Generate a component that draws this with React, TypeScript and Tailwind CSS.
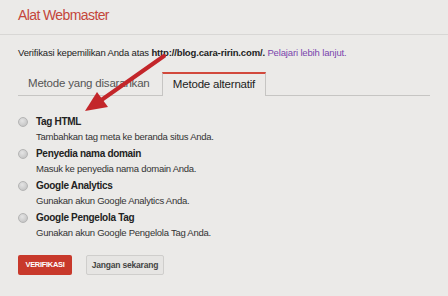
const options = [
  { title: "Tag HTML", desc: "Tambahkan tag meta ke beranda situs Anda." },
  { title: "Penyedia nama domain", desc: "Masuk ke penyedia nama domain Anda." },
  { title: "Google Analytics", desc: "Gunakan akun Google Analytics Anda." },
  { title: "Google Pengelola Tag", desc: "Gunakan akun Google Pengelola Tag Anda." },
];

function Radio() {
  return (
    <span className="mt-[2px] block h-[10px] w-[10px] shrink-0 rounded-full border border-[#b4b4b4] bg-[radial-gradient(circle_at_40%_35%,#e4e4e4,#bdbdbd)]" />
  );
}

function Arrow() {
  return (
    <svg className="pointer-events-none absolute left-0 top-0" width="448" height="296" viewBox="0 0 448 296">
      <line x1="164" y1="56" x2="100" y2="101" stroke="#c3262a" strokeWidth="4" strokeLinecap="round" />
      <polygon points="85,111 97,92 108,107" fill="#c3262a" />
    </svg>
  );
}

export default function App() {
  return (
    <div className="relative h-[296px] w-[448px] overflow-hidden bg-[#ebeae8] font-['Liberation_Sans',Arial,sans-serif] text-[#222]">
      <header className="h-[35px] border-b border-[#d8d7d5] px-[18px] pt-[6px]">
        <h1 className="text-[14px] leading-[18px] tracking-[-0.6px] text-[#c4463a]">Alat Webmaster</h1>
      </header>

      <div className="px-[18px]">
        <p className="mt-[12px] text-[9.5px] leading-[12px] tracking-[-0.15px]">
          Verifikasi kepemilikan Anda atas <b>http://blog.cara-ririn.com/.</b>{" "}
          <a className="text-[#7a45ad]">Pelajari lebih lanjut.</a>
        </p>

        <div className="mt-[13px] flex h-[24px] border-b border-[#c6c5c3]">
          <div className="flex w-[144px] items-center pl-[10px] text-[11.5px] tracking-[-0.2px] text-[#555]">
            Metode yang disarankan
          </div>
          <div className="-mb-px flex w-[104px] items-center justify-center border-x border-t-2 border-x-[#c6c5c3] border-t-[#d2493c] bg-[#ebeae8] text-[11.5px] tracking-[-0.2px] text-[#222]">
            Metode alternatif
          </div>
        </div>

        <ul className="mt-[19px] flex flex-col gap-[4px]">
          {options.map((o) => (
            <li key={o.title} className="flex gap-[8px]">
              <Radio />
              <div>
                <div className="text-[10px] font-bold leading-[13px] tracking-[-0.3px]">{o.title}</div>
                <div className="mt-[3px] text-[9.5px] leading-[12px] tracking-[-0.25px] text-[#333]">{o.desc}</div>
              </div>
            </li>
          ))}
        </ul>

        <div className="mt-[16px] flex gap-[14px]">
          <button
            type="button"
            className="h-[20px] w-[54px] rounded-[2px] bg-[#c8392b] text-[7.5px] font-bold tracking-[-0.3px] text-white"
          >
            VERIFIKASI
          </button>
          <button
            type="button"
            className="h-[20px] w-[78px] rounded-[2px] border border-[#cfcecc] bg-[#e6e5e3] text-[8.5px] font-bold tracking-[-0.2px] text-[#444]"
          >
            Jangan sekarang
          </button>
        </div>
      </div>

      <Arrow />
    </div>
  );
}
